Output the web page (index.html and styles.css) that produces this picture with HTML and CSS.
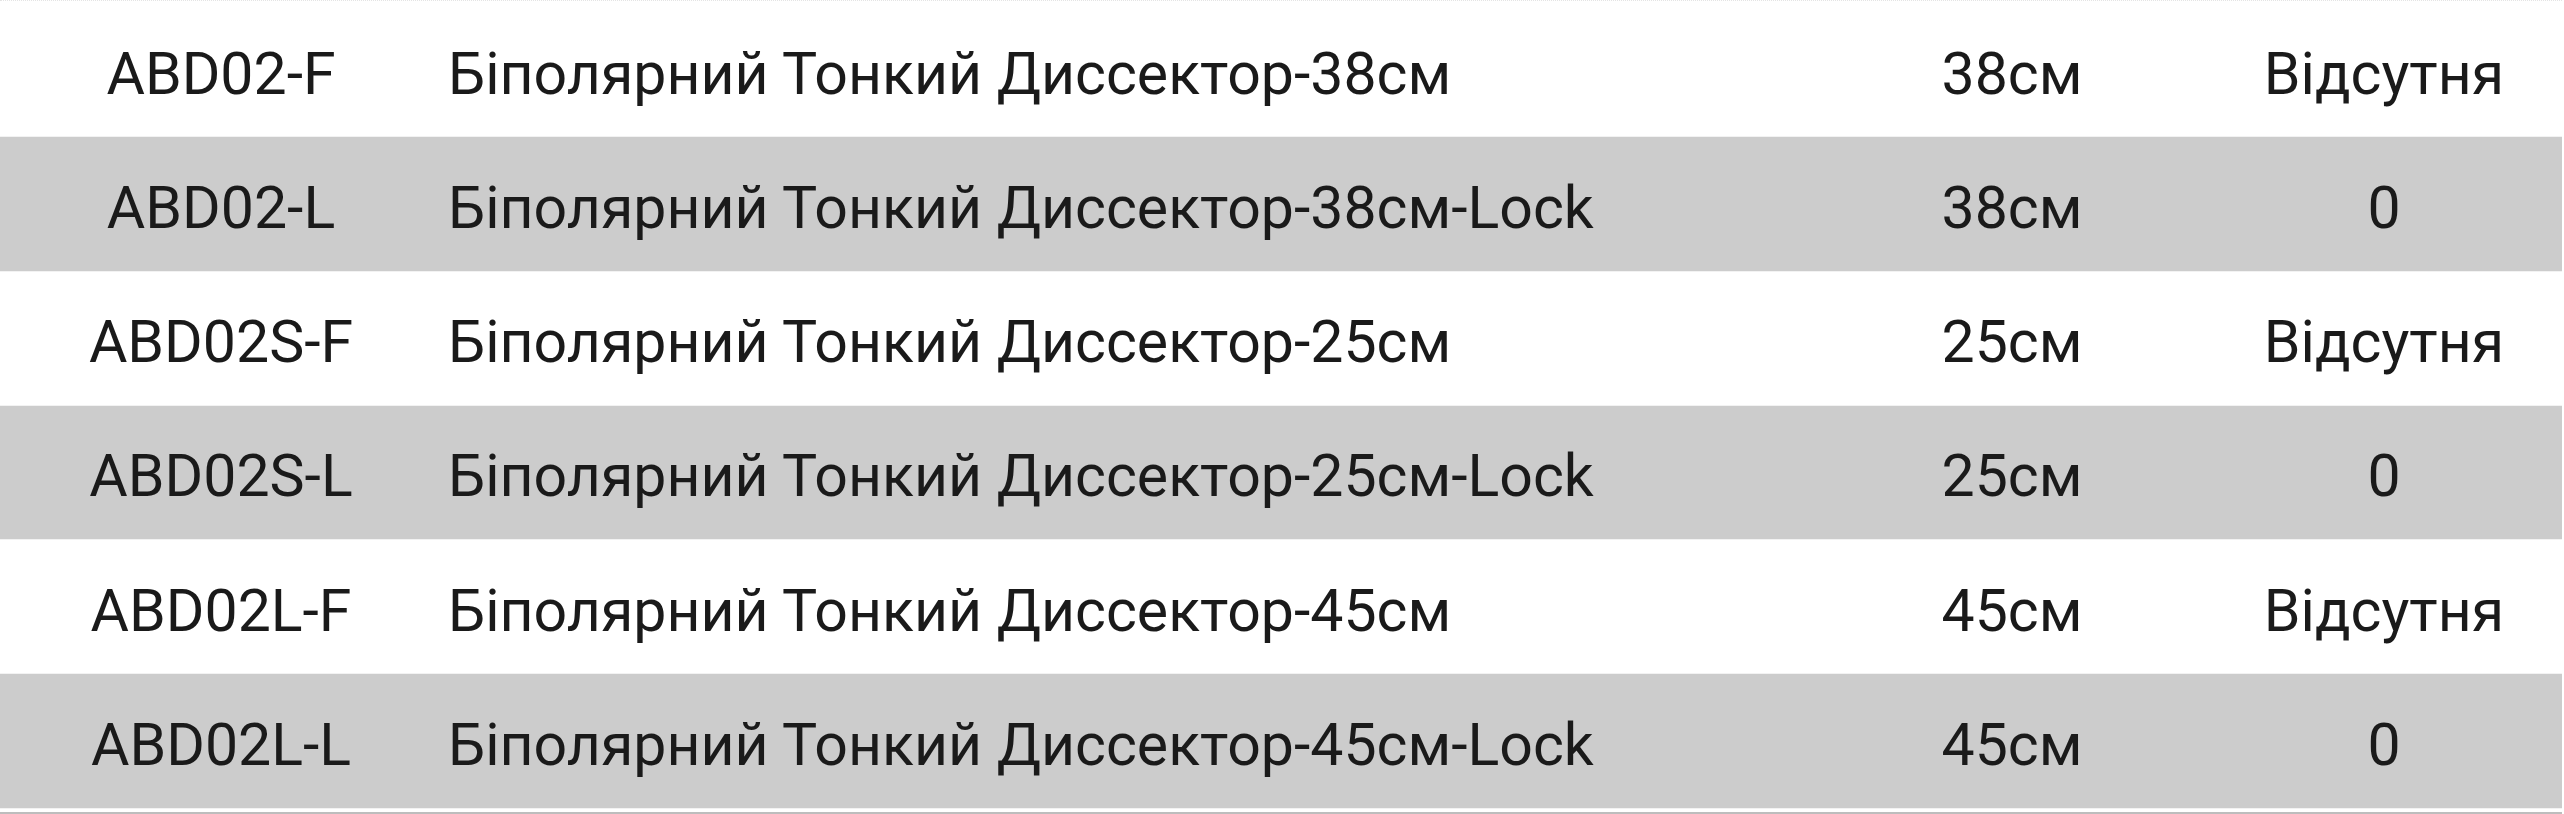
FILE: index.html
```html
<!DOCTYPE html>
<html lang="uk">
<head>
<meta charset="utf-8">
<title>Таблиця</title>
<link rel="stylesheet" href="styles.css">
</head>
<body>
<div class="table">
  <div class="row">
    <div class="cell code">ABD02-F</div>
    <div class="cell name">Біполярний Тонкий Диссектор-38см</div>
    <div class="cell len">38см</div>
    <div class="cell lock">Відсутня</div>
  </div>
  <div class="row alt">
    <div class="cell code">ABD02-L</div>
    <div class="cell name">Біполярний Тонкий Диссектор-38см-Lock</div>
    <div class="cell len">38см</div>
    <div class="cell lock">0</div>
  </div>
  <div class="row">
    <div class="cell code">ABD02S-F</div>
    <div class="cell name">Біполярний Тонкий Диссектор-25см</div>
    <div class="cell len">25см</div>
    <div class="cell lock">Відсутня</div>
  </div>
  <div class="row alt">
    <div class="cell code">ABD02S-L</div>
    <div class="cell name">Біполярний Тонкий Диссектор-25см-Lock</div>
    <div class="cell len">25см</div>
    <div class="cell lock">0</div>
  </div>
  <div class="row">
    <div class="cell code">ABD02L-F</div>
    <div class="cell name">Біполярний Тонкий Диссектор-45см</div>
    <div class="cell len">45см</div>
    <div class="cell lock">Відсутня</div>
  </div>
  <div class="row alt">
    <div class="cell code">ABD02L-L</div>
    <div class="cell name">Біполярний Тонкий Диссектор-45см-Lock</div>
    <div class="cell len">45см</div>
    <div class="cell lock">0</div>
  </div>
</div>
</body>
</html>
```
FILE: styles.css
```css
html, body {
  margin: 0;
  padding: 0;
  background: #ffffff;
}
body {
  font-family: Roboto, "Noto Sans", "Liberation Sans", sans-serif;
  color: #1a1a1a;
  overflow: hidden;
}
.table {
  width: 2562px;
  padding-top: 2px;
  border-top: 1px dotted #e4e4e4;
  box-sizing: border-box;
  padding-bottom: 3px;
  border-bottom: 2px solid #bdbdbd;
}
.row {
  display: grid;
  grid-template-columns: 442px 1376px 388px 356px;
  box-sizing: border-box;
  height: 134.25px;
  padding-top: 7px;
  border-bottom: 1px solid #f2f2f2;
  align-items: center;
  font-size: 59px;
  line-height: 1;
}
.row.alt {
  background: #cccccc;
}
.cell {
  white-space: nowrap;
}
.code, .len, .lock {
  text-align: center;
}
.name {
  padding-left: 6px;
}
```
